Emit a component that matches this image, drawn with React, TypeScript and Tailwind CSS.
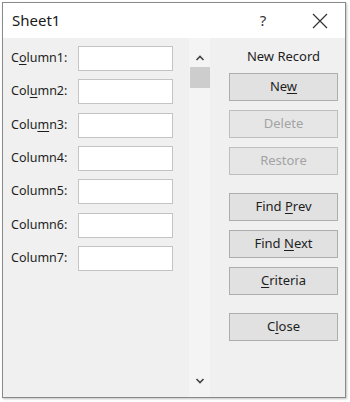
import type { ReactNode } from 'react';

const font = { fontFamily: '"Segoe UI", "Noto Sans", "Open Sans", sans-serif' };

function U({ children }: { children: ReactNode }) {
  return <span className="underline underline-offset-2 decoration-1">{children}</span>;
}

function FieldRow({ pre, u, post }: { pre: string; u: string; post: string }) {
  return (
    <div className="flex items-center h-[25px]">
      <span className="w-[67px] text-[12.5px] text-[#1e1e1e]">
        {pre}
        {u && <U>{u}</U>}
        {post}
      </span>
      <div className="w-[95px] h-[25px] bg-white border border-[#c4c4c4]" />
    </div>
  );
}

function Btn({ children, disabled }: { children: ReactNode; disabled?: boolean }) {
  return (
    <button
      className={`w-[109px] h-[28px] bg-[#e1e1e1] border border-[#adadad] text-[13px] ${
        disabled ? 'text-[#a3a3a3] border-[#bfbfbf] bg-[#e6e6e6]' : 'text-[#1e1e1e]'
      }`}
    >
      {children}
    </button>
  );
}

export default function App() {
  const rows = [
    { pre: 'C', u: 'o', post: 'lumn1:' },
    { pre: 'Col', u: 'u', post: 'mn2:' },
    { pre: 'Colu', u: 'm', post: 'n3:' },
    { pre: 'Column4:', u: '', post: '' },
    { pre: 'Column5:', u: '', post: '' },
    { pre: 'Column6:', u: '', post: '' },
    { pre: 'Column7:', u: '', post: '' },
  ];

  return (
    <div className="w-[350px] h-[402px] bg-white pl-[2px] pt-[2px]" style={font}>
      <div className="w-[344px] h-[396px] border border-[#8a8a8a] shadow-[1px_1px_2px_rgba(0,0,0,0.25)] flex flex-col bg-[#f0f0f0]">
        {/* title bar */}
        <div className="h-[35px] bg-white flex items-center shrink-0">
          <span className="pl-[9px] text-[15px] text-[#1a1a1a] flex-1">Sheet1</span>
          <span className="text-[15px] text-[#333] w-[20px] text-center mr-[39px]">?</span>
          <svg width="16" height="16" viewBox="0 0 16 16" className="mr-[17px]">
            <path d="M1 1L15 15M15 1L1 15" stroke="#333" strokeWidth="1.2" fill="none" />
          </svg>
        </div>

        {/* body */}
        <div className="flex flex-1">
          <div className="w-[186px] pl-[8px] pt-[8px] flex flex-col gap-[8.34px]">
            {rows.map((r, i) => (
              <FieldRow key={i} {...r} />
            ))}
          </div>

          {/* scrollbar */}
          <div className="w-[21px] bg-[#f4f4f4] flex flex-col items-center">
            <svg width="10" height="8" viewBox="0 0 10 8" className="mt-[16px]">
              <path d="M1.5 6L5 2.5L8.5 6" stroke="#444" strokeWidth="1.6" fill="none" />
            </svg>
            <div className="w-[20px] h-[21px] bg-[#cdcdcd] mt-[5px]" />
            <div className="flex-1" />
            <svg width="10" height="8" viewBox="0 0 10 8" className="mb-[12px]">
              <path d="M1.5 2L5 5.5L8.5 2" stroke="#444" strokeWidth="1.6" fill="none" />
            </svg>
          </div>

          {/* right panel */}
          <div className="flex-1 flex flex-col items-center pl-[12px] pt-[8px]">
            <div className="text-[13px] text-[#1e1e1e] h-[20px] leading-[20px] mb-[7px]">New Record</div>
            <div className="flex flex-col gap-[9px]">
              <Btn>
                Ne<U>w</U>
              </Btn>
              <Btn disabled>Delete</Btn>
              <Btn disabled>Restore</Btn>
            </div>
            <div className="flex flex-col gap-[9px] mt-[18px]">
              <Btn>
                Find <U>P</U>rev
              </Btn>
              <Btn>
                Find <U>N</U>ext
              </Btn>
              <Btn>
                <U>C</U>riteria
              </Btn>
            </div>
            <div className="mt-[18px]">
              <Btn>
                C<U>l</U>ose
              </Btn>
            </div>
          </div>
        </div>
      </div>
    </div>
  );
}
